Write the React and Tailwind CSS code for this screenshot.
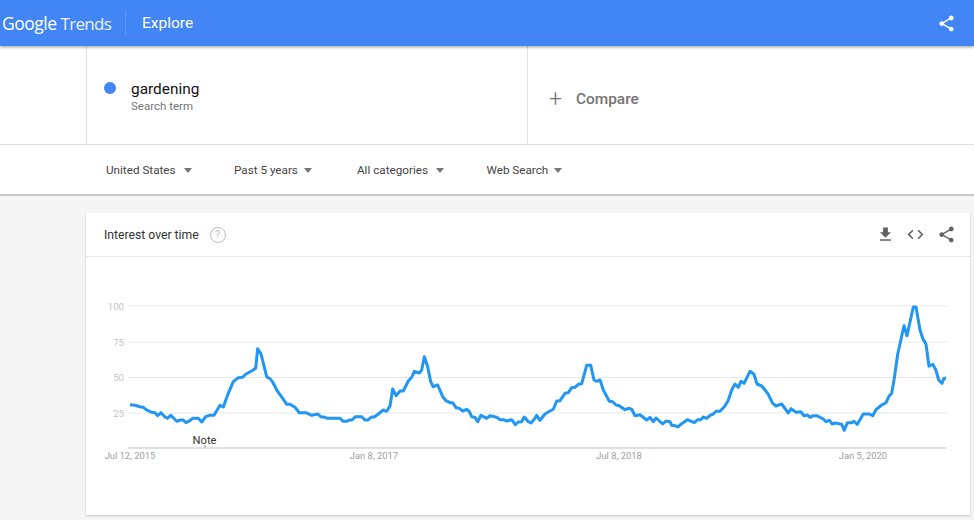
const share = "M18 16.08c-.76 0-1.44.3-1.96.77L8.91 12.7c.05-.23.09-.46.09-.7s-.04-.47-.09-.7l7.05-4.11c.54.5 1.25.81 2.04.81 1.66 0 3-1.34 3-3s-1.34-3-3-3-3 1.34-3 3c0 .24.04.47.09.7L8.04 9.81C7.5 9.31 6.79 9 6 9c-1.66 0-3 1.34-3 3s1.34 3 3 3c.79 0 1.5-.31 2.04-.81l7.12 4.16c-.05.21-.08.43-.08.65 0 1.61 1.31 2.92 2.92 2.92 1.61 0 2.92-1.31 2.92-2.92s-1.31-2.92-2.92-2.92z";
const download = "M19 9h-4V3H9v6H5l7 7 7-7zM5 18v2h14v-2H5z";
const code = "M9.4 16.6L4.8 12l4.6-4.6L8 6l-6 6 6 6 1.4-1.4zm5.2 0l4.6-4.6-4.6-4.6L16 6l6 6-6 6-1.4-1.4z";

const seg1 = [[120,344],[135,346],[150,350],[160,352],[170,360],[185,367],[195,368],[203,377],[213,368],[225,381],[232,385],[242,376],[260,394],[272,390],[280,390],[288,398],[298,393],[308,385],[325,385],[335,396],[347,380],[358,376],[372,376],[390,346],[400,351],[415,310],[430,275],[445,263],[458,262],[467,253],[490,240],[497,234],[503,176],[513,192],[530,260],[542,268],[550,280],[562,303],[578,325],[590,343],[600,343],[615,352],[628,368],[648,368],[665,376],[683,372],[692,380],[705,382],[712,385],[750,385],[760,394],[770,394],[778,390],[786,390],[796,380],[815,380],[825,390],[833,390],[845,381],[853,381],[865,372],[880,360],[890,364]];
const seg2 = [[60,198],[68,147],[78,167],[90,153],[100,153],[115,123],[125,112],[133,94],[148,99],[155,90],[163,50],[173,80],[182,125],[190,140],[203,135],[218,170],[228,182],[240,188],[248,188],[258,203],[268,205],[278,213],[290,208],[298,215],[305,230],[315,232],[323,245],[333,226],[350,235],[360,227],[380,232],[390,239],[400,239],[410,243],[425,239],[436,254],[445,246],[455,245],[463,231],[475,245],[483,249],[493,238],[500,226],[510,241],[525,222],[535,216],[550,208],[560,183],[570,182],[585,160],[595,158],[605,143],[615,142],[625,133],[635,131],[650,76],[662,76],[672,120],[680,124],[690,120],[700,150],[708,165],[718,184],[728,185],[738,195],[748,197],[765,209],[775,205],[785,208],[795,227],[810,224],[830,240],[840,232],[850,245],[858,234],[878,252],[888,243]];
const seg3 = [[30,380],[35,391],[45,392],[53,396],[65,386],[82,374],[103,383],[113,374],[122,374],[130,366],[140,370],[150,361],[160,357],[168,349],[180,349],[195,333],[205,316],[215,285],[225,267],[235,277],[243,259],[252,265],[270,229],[282,238],[291,267],[305,273],[315,285],[325,298],[338,325],[348,333],[365,327],[385,354],[393,341],[408,352],[422,350],[432,362],[442,360],[450,367],[460,362],[470,362],[490,372],[498,380],[508,376],[517,387],[525,384],[545,388],[553,406],[562,383],[575,383],[582,379],[592,388],[610,357],[628,357],[638,362],[648,344],[665,330],[678,323],[688,302],[695,295],[703,250],[713,178],[732,92],[741,122],[760,36],[768,36],[780,105],[788,130],[798,148],[807,214],[818,208],[828,226],[836,255],[846,265],[852,250],[858,250]];
const toPx = (pts, ox, oy) => pts.map(([x, y]) => `${(ox + x / 3).toFixed(1)},${(oy + y / 3).toFixed(1)}`);
const line = [...toPx(seg1, 90, 290), ...toPx(seg2, 370, 340), ...toPx(seg3, 660, 295)].join(" ");

function Icon({ d, className }) {
  return (
    <svg viewBox="0 0 24 24" className={className} fill="currentColor">
      <path d={d} />
    </svg>
  );
}

function Filter({ label, gap, width }) {
  return (
    <div className={`flex items-center ${width}`}>
      <span className="text-[11.7px] text-[#444]">{label}</span>
      <span className={`${gap} h-0 w-0 border-x-[4.5px] border-t-[5px] border-x-transparent border-t-[#757575]`} />
    </div>
  );
}

export default function App() {
  return (
    <div className="h-[520px] w-[974px] overflow-hidden bg-[#f5f5f5] font-['Roboto',sans-serif]">
      <header className="relative z-10 flex h-[46px] items-center bg-[#4285f4] text-white shadow-[0_1px_3px_rgba(0,0,0,0.4)]">
        <div className="ml-[2px] flex w-[123px] items-baseline gap-[4px] font-['Open_Sans',sans-serif] text-[17.5px] tracking-[-0.5px]">
          <span className="font-medium">Google</span>
          <span className="text-[17px] tracking-[-0.7px] opacity-90">Trends</span>
        </div>
        <div className="h-[24px] w-px bg-white/15" />
        <span className="ml-[16px] mt-[2px] text-[15.5px] text-white">Explore</span>
        <Icon d={share} className="ml-auto mr-[18px] h-[19px] w-[19px]" />
      </header>

      <div className="flex h-[99px] border-b border-[#e0e0e0] bg-white">
        <div className="ml-[86px] flex w-[442px] border-x border-[#e0e0e0] pl-[17px] pt-[36px]">
          <span className="h-[12px] w-[12px] rounded-full bg-[#4285f4]" />
          <div className="ml-[15px]">
            <div className="text-[15.4px] leading-[14px] text-[#111]">gardening</div>
            <div className="mt-[3px] text-[11.5px] leading-[14px] text-[#757575]">Search term</div>
          </div>
        </div>
        <div className="flex flex-1 items-center pl-[21px] pt-[9px] text-[#757575]">
          <span className="text-[23px] font-light leading-none">+</span>
          <span className="ml-[14px] text-[15.4px] font-medium">Compare</span>
        </div>
      </div>

      <div className="flex h-[51px] items-center border-b-2 border-[#c8c8c8] bg-white pl-[106px] pt-[3px]">
        <Filter label="United States" gap="ml-[8.5px]" width="w-[128px]" />
        <Filter label="Past 5 years" gap="ml-[6.5px]" width="w-[123px]" />
        <Filter label="All categories" gap="ml-[8.5px]" width="w-[129.5px]" />
        <Filter label="Web Search" gap="ml-[5.5px]" width="" />
      </div>

      <section className="ml-[86px] mr-[4px] mt-[17px] h-[302px] bg-white shadow-[0_1px_2px_rgba(0,0,0,0.2)]">
        <div className="flex h-[44px] items-center border-b border-[#e6e6e6] pl-[18px] pr-[14px]">
          <span className="pt-[2px] text-[12.2px] text-[#333]">Interest over time</span>
          <span className="ml-[11px] flex h-[16px] w-[16px] items-center justify-center rounded-full border-[1.5px] border-[#bdbdbd] text-[11px] leading-none text-[#bdbdbd]">?</span>
          <div className="ml-auto flex items-center gap-[12px] text-[#616161]">
            <Icon d={download} className="relative left-[1px] h-[19px] w-[19px]" />
            <Icon d={code} className="h-[19px] w-[19px]" />
            <Icon d={share} className="h-[19px] w-[19px]" />
          </div>
        </div>
        <svg viewBox="86 257 884 258" className="block h-[258px] w-[884px]">
          {[306, 342, 377.5, 413].map((y) => (
            <line key={y} x1="128" x2="947" y1={y} y2={y} stroke="#e8e8e8" strokeWidth="1" />
          ))}
          <line x1="128" x2="947" y1="448" y2="448" stroke="#c4c4c4" strokeWidth="1" />
          <line x1="205" x2="205" y1="445" y2="448" stroke="#999" strokeWidth="1" />
          {[["100", 310], ["75", 346], ["50", 381], ["25", 417]].map(([t, y]) => (
            <text key={t} x="124" y={y} textAnchor="end" fontSize="9.6" fill="#c4c4c4">{t}</text>
          ))}
          {[["Jul 12, 2015", 130], ["Jan 8, 2017", 374], ["Jul 8, 2018", 619], ["Jan 5, 2020", 863]].map(([t, x]) => (
            <text key={t} x={x} y="458.5" textAnchor="middle" fontSize="9.4" fill="#9e9e9e">{t}</text>
          ))}
          <text x="204.5" y="444" textAnchor="middle" fontSize="11.2" fill="#333">Note</text>
          <polyline points={line} fill="none" stroke="#2196f3" strokeWidth="3" strokeLinejoin="round" />
        </svg>
      </section>
    </div>
  );
}
